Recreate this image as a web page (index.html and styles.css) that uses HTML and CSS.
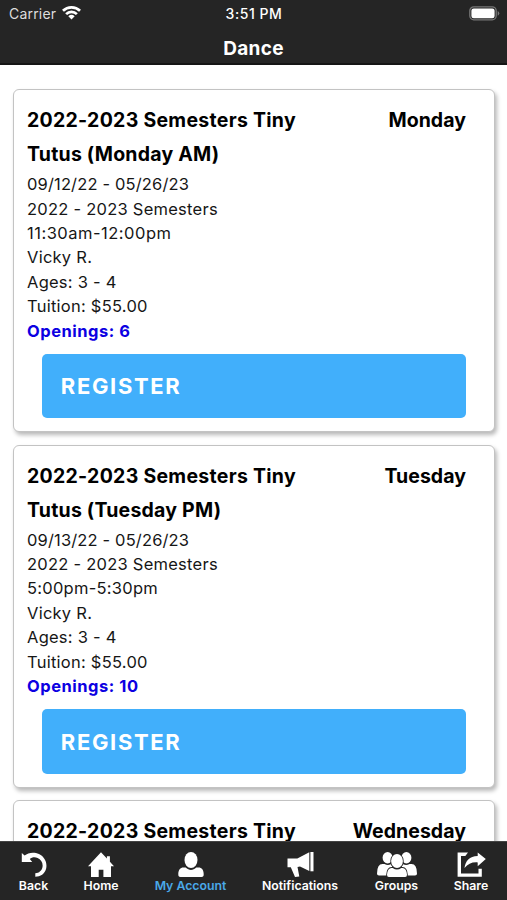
FILE: index.html
```html
<!DOCTYPE html>
<html lang="en">
<head>
<meta charset="utf-8">
<title>Dance</title>
<link rel="stylesheet" href="styles.css">
</head>
<body>
<div class="app">
  <header class="header">
    <div class="status">
      <div class="carrier"><span>Carrier</span>
        <svg class="wifi" viewBox="0 0 18 14"><path d="M0 4.5a13 13 0 0 1 18 0L16.2 6.4a10.3 10.3 0 0 0-14.4 0z"/><path d="M3 7.6a8.7 8.7 0 0 1 12 0l-1.8 1.8a6.1 6.1 0 0 0-8.4 0z"/><path d="M6 10.6a4.4 4.4 0 0 1 6 0L9 13.6z"/></svg>
      </div>
      <span class="time">3:51 PM</span>
      <svg class="battery" viewBox="0 0 31 15"><rect x=".8" y=".8" width="26.4" height="13" rx="4" fill="none" stroke="#777" stroke-width="1.3"/><rect x="2.4" y="2.4" width="23.2" height="9.8" rx="2.3" fill="#fff"/><path d="M28.7 5v4.7q1.6-.7 1.6-2.35T28.7 5" fill="#777"/></svg>
    </div>
    <h1 class="title">Dance</h1>
  </header>
  <main class="list">
    <article class="card">
      <div class="head"><h2 class="name">2022-2023 Semesters Tiny<br><span class="second">Tutus (Monday AM)</span></h2><span class="day">Monday</span></div>
      <ul class="details"><li class="dates">09/12/22 - 05/26/23</li><li>2022 - 2023 Semesters</li><li class="hours">11:30am-12:00pm</li><li>Vicky R.</li><li>Ages: 3 - 4</li><li>Tuition: $55.00</li><li class="openings">Openings: 6</li></ul>
      <button class="register">REGISTER</button>
    </article>
    <article class="card">
      <div class="head"><h2 class="name">2022-2023 Semesters Tiny<br><span class="second">Tutus (Tuesday PM)</span></h2><span class="day">Tuesday</span></div>
      <ul class="details"><li class="dates">09/13/22 - 05/26/23</li><li>2022 - 2023 Semesters</li><li>5:00pm-5:30pm</li><li>Vicky R.</li><li>Ages: 3 - 4</li><li>Tuition: $55.00</li><li class="openings">Openings: 10</li></ul>
      <button class="register">REGISTER</button>
    </article>
    <article class="card">
      <div class="head"><h2 class="name">2022-2023 Semesters Tiny</h2><span class="day">Wednesday</span></div>
    </article>
  </main>
  <nav class="tabs">
    <a class="tab"><svg width="26" height="26" viewBox="0 0 26 26"><path d="M.8 1 3.6 3.5C7 .6 13-.4 18 2.1c5.7 2.8 8.5 8.8 7.1 14.6-1.3 5-5.6 8-10.8 8v-3.5c3.8 0 6.6-2.8 7.2-6.2.7-4.2-1.4-7.7-4.9-9.1-2.9-1.1-5.9-.6-7.8 1l2.4 3.2H.8z"/></svg><span>Back</span></a>
    <a class="tab"><svg width="26" height="26" viewBox="0 0 26 26"><path d="M13 .3 0 14.2h3v10.7h7.7v-7.2h4.7v7.2H23V14.2h3l-4.1-4.5V4.2h-3v2.3z"/></svg><span>Home</span></a>
    <a class="tab active"><svg width="26" height="26" viewBox="0 0 26 26"><ellipse cx="13" cy="8" rx="6.5" ry="8"/><path d="M5.5 15.5h2.2C11 18.7 15 18.7 18.3 15.5h2.2c3.3 0 5.2 2.6 5.2 6.7 0 1.9-.5 2.7-2.2 2.7h-21C.8 24.9.3 24 .3 22.2c0-4.1 1.9-6.7 5.2-6.7"/></svg><span>My Account</span></a>
    <a class="tab"><svg width="27" height="26" viewBox="0 0 27 26"><path d="M.5 6.5h9.8L22.3.3v18.8L13 14.5l-2.5.4 1.8 9.5-4.3.6-4.2-9.8H.5z"/><path d="M23.4 0h3.1v19.3h-3.1z"/></svg><span>Notifications</span></a>
    <a class="tab"><svg width="40" height="26" viewBox="0 0 40 26"><ellipse cx="10.6" cy="5.8" rx="5" ry="5.7"/><ellipse cx="29.4" cy="5.8" rx="5" ry="5.7"/><path d="M5.5 12h2q3.2 1.8 6.3.3l2 3.2q-5.2 1.4-5.8 8H2q-2 0-2-1.8 0-9.7 5.5-9.7M34.5 12h-2q-3.2 1.8-6.3.3l-2 3.2q5.2 1.4 5.8 8h8q2 0 2-1.8 0-9.7-5.5-9.7"/><path d="M14.5 15.9h1.2q4.3 3 8.6 0h1.2q4 .2 4.5 6.8.1 2.3-1.9 2.3H11.9q-2 0-1.9-2.3.5-6.6 4.5-6.8" stroke="#252525" stroke-width="1.6" paint-order="stroke"/><ellipse cx="20" cy="9" rx="5.9" ry="7" stroke="#252525" stroke-width="1.6" paint-order="stroke"/></svg><span>Groups</span></a>
    <a class="tab"><svg width="29" height="26" viewBox="0 0 29 26"><path d="M11 .6H.6v24.1h24.2v-8h-3.3v4.7H4V4h4.3z"/><path d="M20.7.5 28.8 7l-8.1 7.2v-3.8c-6-.4-9.6 1.5-13.2 5.7C8.2 9.4 12.5 4 20.7 4z"/></svg><span>Share</span></a>
  </nav>
</div>
</body>
</html>
```

FILE: styles.css
```css
* { box-sizing: border-box; }
body { margin: 0; background: #fff; font-family: Inter, "Liberation Sans", sans-serif; color: #000; }
.app { height: 900px; display: flex; flex-direction: column; overflow: hidden; }
.header { height: 65px; flex: none; background: #252525; color: #fff; border-bottom: 2px solid #151515; }
.status { height: 27px; padding: 0 7px 0 9px; display: grid; grid-template-columns: 1fr auto 1fr; align-items: center; font-size: 14px; }
.carrier { display: flex; align-items: center; gap: 6px; color: #ddd; font-size: 14px; letter-spacing: .2px; }
.wifi { width: 19px; height: 15px; fill: #fff; margin-top: -2px; }
.time { font-weight: 500; letter-spacing: .55px; margin-right: 1px; }
.battery { width: 31px; height: 15px; justify-self: end; }
.title { margin: 0; line-height: 43px; text-align: center; font-size: 19px; font-weight: 700; letter-spacing: .3px; }
.list { flex: 1; min-height: 0; overflow: hidden; padding: 24px 12px 0 13px; display: flex; flex-direction: column; gap: 12.5px; }
.card { flex: none; height: 343px; padding: 13px 28px 0 13px; border: 1px solid #c3c3c3; border-radius: 6px; background: #fff; box-shadow: 2px 3px 4px rgba(0,0,0,.28); }
.head { display: flex; justify-content: space-between; font-size: 19.5px; font-weight: 700; line-height: 34.3px; white-space: nowrap; }
.name { margin: 0; font: inherit; letter-spacing: .28px; }
.second { letter-spacing: .22px; }
.day { letter-spacing: .04px; }
.details { list-style: none; margin: .5px 0 0; padding: 0; font-size: 16.5px; line-height: 24.4px; color: #161616; letter-spacing: .25px; white-space: nowrap; }
.dates { letter-spacing: .15px; }
.hours { letter-spacing: .5px; }
.openings { color: #0c00e2; font-weight: 700; letter-spacing: .52px; }
.register { display: block; width: calc(100% - 15.5px); height: 64.5px; margin: 10.7px 0 0 15.3px; padding: 1px 18.5px 0; border: 0; border-radius: 5px; background: #41affb; color: #fff; text-align: left; font: 700 22px Inter, "Liberation Sans", sans-serif; letter-spacing: 1.65px; }
.tabs { height: 59px; flex: none; display: grid; grid-template-columns: 67px 68px 111px 108px 85px 64px; background: #252525; border-top: 1px solid #444; }
.tab { display: flex; flex-direction: column; align-items: center; padding-top: 9.5px; color: #fff; font-size: 12.3px; font-weight: 600; line-height: 16px; white-space: nowrap; }
.tab svg { fill: #fff; flex: none; }
.active { color: #4aa9e9; }
```
